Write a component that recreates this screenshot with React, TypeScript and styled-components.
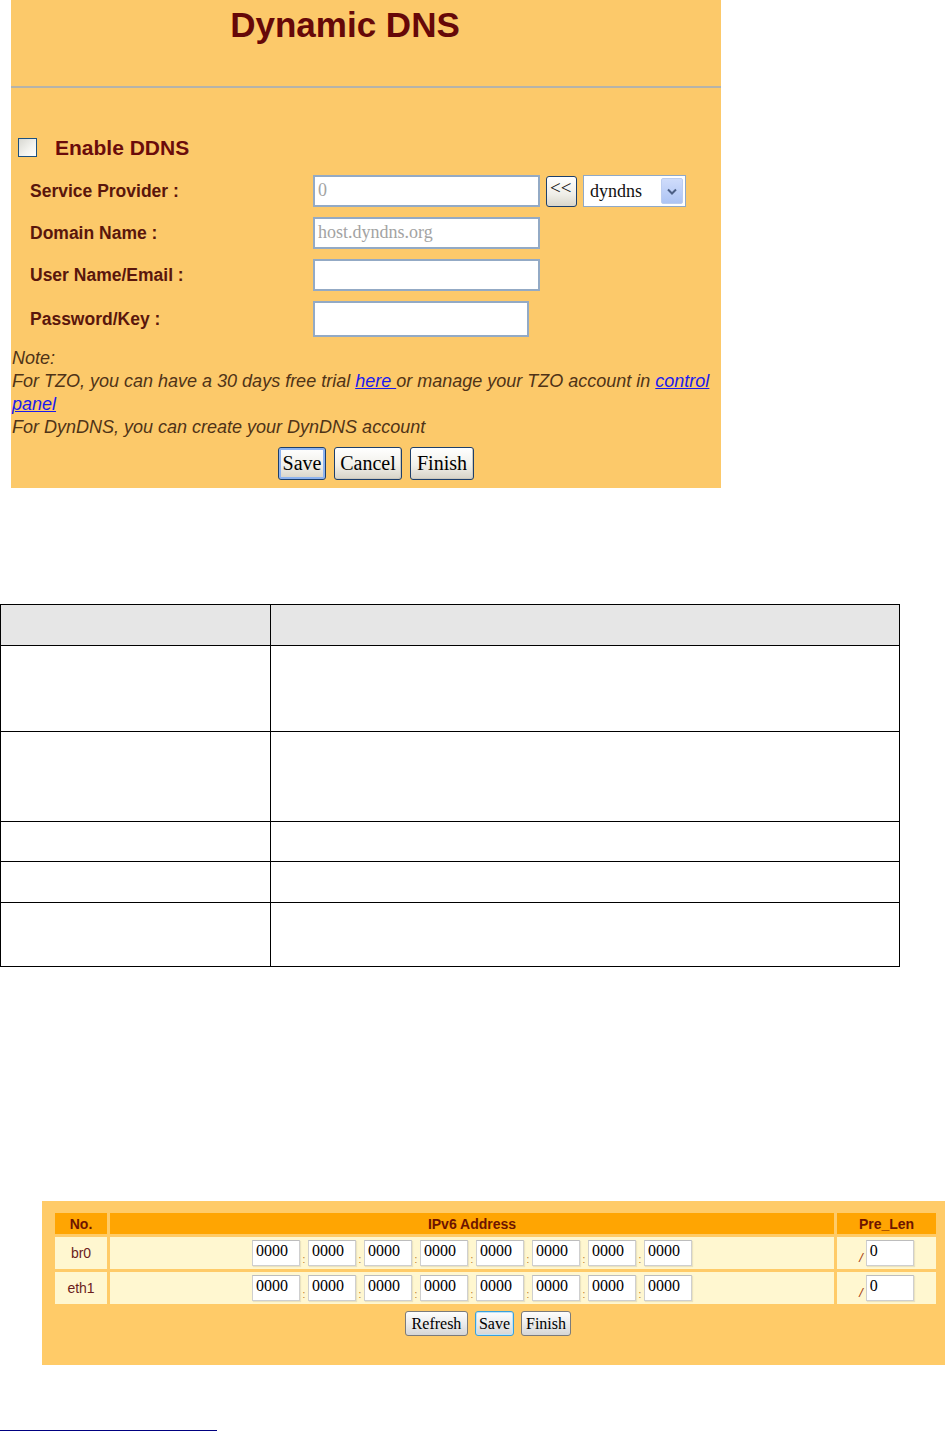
import React from 'react';
import styled, { createGlobalStyle } from 'styled-components';

const GlobalStyle = createGlobalStyle`
  html, body { margin: 0; padding: 0; background: #ffffff; overflow-x: hidden; }
  body { font-family: "Liberation Sans", Arial, sans-serif; }
  * { box-sizing: border-box; }
`;

const Page = styled.div`
  width: 945px;
  display: flex;
  flex-direction: column;
  align-items: flex-start;
`;

/* ---------- Dynamic DNS panel ---------- */
const DdnsPanel = styled.section`
  margin-left: 11px;
  width: 710px;
  height: 488px;
  background: #fcc96a;
  display: flex;
  flex-direction: column;
`;

const TitleBar = styled.header`
  height: 88px;
  border-bottom: 2px solid #b5b3aa;
  padding-right: 42px;
  text-align: center;
`;

const Title = styled.h1`
  margin: 0;
  padding-top: 5px;
  font-size: 35px;
  line-height: 40px;
  font-weight: bold;
  color: #660808;
`;

const FormBody = styled.div`
  display: flex;
  flex-direction: column;
`;

const CheckRow = styled.label`
  margin-top: 50px;
  margin-left: 7px;
  height: 19px;
  display: flex;
  align-items: center;
  gap: 18px;
  font-size: 21px;
  font-weight: bold;
  color: #6a0b0b;
`;

const CheckBox = styled.span`
  width: 19px;
  height: 19px;
  border: 1px solid #1c5180;
  background: linear-gradient(135deg, #d8d8d2 0%, #f4f4f0 60%, #ffffff 100%);
`;

const FieldGrid = styled.div`
  margin-top: 18px;
  padding-left: 19px;
  display: grid;
  grid-template-columns: 283px auto;
  row-gap: 10px;
  align-items: center;
`;

const FieldLabel = styled.span`
  font-size: 17.5px;
  font-weight: bold;
  color: #5a160c;
`;

const FieldCell = styled.div`
  display: flex;
  align-items: center;
  gap: 6px;
`;

const TextBox = styled.div<{ $w: number; $h: number }>`
  width: ${(p) => p.$w}px;
  height: ${(p) => p.$h}px;
  border: 2px solid #93aac5;
  background: #ffffff;
  padding: 2px 3px;
  font-family: "Liberation Serif", "Times New Roman", serif;
  font-size: 18px;
  line-height: 22px;
  color: #a3a3a3;
`;

const SmallXpButton = styled.div`
  width: 31px;
  height: 31px;
  border: 1px solid #1d3f6b;
  border-radius: 3px;
  background: linear-gradient(#ffffff, #efeee8 60%, #d9d6cb);
  font-family: "Liberation Serif", "Times New Roman", serif;
  font-size: 19px;
  line-height: 20px;
  padding: 1px 0 0 3px;
  color: #111;
`;

const SelectBox = styled.div`
  width: 103px;
  height: 32px;
  border: 1px solid #8fa9c8;
  background: #ffffff;
  display: flex;
  align-items: center;
  justify-content: space-between;
  padding: 2px 2px 2px 6px;
  font-family: "Liberation Serif", "Times New Roman", serif;
  font-size: 18px;
  color: #111;
`;

const SelectArrow = styled.span`
  width: 22px;
  height: 26px;
  border: 1px solid #bccdf0;
  border-radius: 2px;
  background: linear-gradient(#cfdcfb, #adc4f4);
  display: flex;
  align-items: center;
  justify-content: center;
`;

const Note = styled.div`
  margin-top: 10px;
  padding-left: 1px;
  font-size: 18px;
  line-height: 23px;
  font-style: italic;
  color: #4f3317;
`;

const NoteLink = styled.a`
  color: #1a1aee;
  text-decoration: underline;
`;

const ButtonRow = styled.div<{ $shift: number; $top: number; $gap: number }>`
  margin-top: ${(p) => p.$top}px;
  display: flex;
  justify-content: center;
  gap: ${(p) => p.$gap}px;
  padding-left: ${(p) => Math.max(p.$shift, 0)}px;
  padding-right: ${(p) => Math.max(-p.$shift, 0)}px;
`;

const XpButton = styled.button<{ $w: number; $focus?: boolean }>`
  width: ${(p) => p.$w}px;
  height: 33px;
  padding: 0;
  border: 1px solid #1d3f6b;
  border-radius: 3px;
  background: linear-gradient(#ffffff, #f1f0ea 55%, #d7d3c7);
  font-family: "Liberation Serif", "Times New Roman", serif;
  font-size: 20px;
  color: #000;
  box-shadow: ${(p) => (p.$focus ? 'inset 0 0 0 2px #8db3ef' : 'inset -1px -1px 0 #cbc8bd')};
`;

/* ---------- description table ---------- */
const DescTable = styled.table`
  margin-top: 116px;
  width: 900px;
  border-collapse: collapse;
  border: 1px solid #000;
`;

const DescRow = styled.tr<{ $h: number; $head?: boolean }>`
  height: ${(p) => p.$h}px;
  background: ${(p) => (p.$head ? '#e6e6e6' : '#ffffff')};
`;

const DescCell = styled.td`
  border: 1px solid #000;
  padding: 0;
  &:first-child { width: 270px; }
`;

/* ---------- IPv6 panel ---------- */
const Ipv6Panel = styled.section`
  margin-top: 234px;
  margin-left: 42px;
  width: 907px;
  height: 164px;
  flex-shrink: 0;
  background: #ffcb68;
  padding: 9px 10px 0 10px;
`;

const Ipv6Table = styled.table`
  width: 887px;
  border-collapse: separate;
  border-spacing: 3px;
  font-size: 14px;
`;

const HeadCell = styled.th<{ $w: number }>`
  width: ${(p) => p.$w}px;
  height: 21px;
  padding: 0;
  background: #ffa502;
  color: #6e1400;
  font-weight: bold;
  font-size: 14px;
  text-align: center;
`;

const BodyCell = styled.td`
  height: 32px;
  padding: 0;
  background: #fff7d0;
  color: #6b1d1d;
  text-align: center;
  vertical-align: middle;
`;

const AddrGroup = styled.div`
  display: inline-flex;
  align-items: center;
`;

const AddrBox = styled.div`
  width: 48px;
  height: 26px;
  border: 1px solid #cfcfcf;
  border-top-color: #bdbdbd;
  box-shadow: 1px 1px 1px rgba(0, 0, 0, 0.08);
  background: #fff;
  padding: 0 3px;
  text-align: left;
  font-family: "Liberation Serif", "Times New Roman", serif;
  font-size: 16px;
  line-height: 20px;
  color: #000;
`;

const Sep = styled.span`
  width: 8px;
  align-self: flex-end;
  text-align: center;
  font-size: 10px;
  line-height: 12px;
  color: #b8741c;
`;

const Slash = styled.span`
  margin-right: 3px;
  align-self: flex-end;
  font-size: 13px;
  line-height: 16px;
  font-style: italic;
  color: #a2380e;
`;

const SmallButton = styled.button<{ $w: number; $focus?: boolean }>`
  width: ${(p) => p.$w}px;
  height: 25px;
  padding: 0;
  border: 1px solid ${(p) => (p.$focus ? '#3aa0dc' : '#7b7b7b')};
  border-radius: 3px;
  background: linear-gradient(#fdfdfd, #ececec 50%, #d6d6d6);
  font-family: "Liberation Serif", "Times New Roman", serif;
  font-size: 16px;
  color: #000;
  box-shadow: ${(p) => (p.$focus ? 'inset 0 0 0 1px #bfe3f7' : 'none')};
`;

const FootRule = styled.div`
  margin-top: 65px;
  width: 217px;
  height: 2px;
  background: #000080;
`;

const ChevronDown = () => (
  <svg width="10" height="7" viewBox="0 0 10 7">
    <path d="M1 1.5 L5 5.5 L9 1.5" fill="none" stroke="#4b5f86" strokeWidth="2" />
  </svg>
);

const descRows = [86, 90, 40, 41, 64];
const addrParts = Array.from({ length: 8 }, () => '0000');

function AddressCells() {
  return (
    <AddrGroup>
      {addrParts.map((v, i) => (
        <React.Fragment key={i}>
          {i > 0 && <Sep>:</Sep>}
          <AddrBox>{v}</AddrBox>
        </React.Fragment>
      ))}
    </AddrGroup>
  );
}

function PrefixCell() {
  return (
    <AddrGroup>
      <Slash>/</Slash>
      <AddrBox>0</AddrBox>
    </AddrGroup>
  );
}

export default function App() {
  return (
    <>
      <GlobalStyle />
      <Page>
        <DdnsPanel>
          <TitleBar>
            <Title>Dynamic DNS</Title>
          </TitleBar>
          <FormBody>
            <CheckRow>
              <CheckBox />
              Enable DDNS
            </CheckRow>
            <FieldGrid>
              <FieldLabel>Service Provider :</FieldLabel>
              <FieldCell>
                <TextBox $w={227} $h={32}>0</TextBox>
                <SmallXpButton>&lt;&lt;</SmallXpButton>
                <SelectBox>
                  dyndns
                  <SelectArrow>
                    <ChevronDown />
                  </SelectArrow>
                </SelectBox>
              </FieldCell>
              <FieldLabel>Domain Name :</FieldLabel>
              <FieldCell>
                <TextBox $w={227} $h={32}>host.dyndns.org</TextBox>
              </FieldCell>
              <FieldLabel>User Name/Email :</FieldLabel>
              <FieldCell>
                <TextBox $w={227} $h={32} />
              </FieldCell>
              <FieldLabel>Password/Key :</FieldLabel>
              <FieldCell>
                <TextBox $w={216} $h={36} />
              </FieldCell>
            </FieldGrid>
            <Note>
              <div>Note:</div>
              <div>
                For TZO, you can have a 30 days free trial <NoteLink href="#">here </NoteLink>or manage
                your TZO account in <NoteLink href="#">control panel</NoteLink>
              </div>
              <div>For DynDNS, you can create your DynDNS account</div>
            </Note>
            <ButtonRow $shift={20} $top={8} $gap={8}>
              <XpButton $w={48} $focus>Save</XpButton>
              <XpButton $w={68}>Cancel</XpButton>
              <XpButton $w={64}>Finish</XpButton>
            </ButtonRow>
          </FormBody>
        </DdnsPanel>

        <DescTable>
          <tbody>
            <DescRow $h={41} $head>
              <DescCell />
              <DescCell />
            </DescRow>
            {descRows.map((h, i) => (
              <DescRow key={i} $h={h}>
                <DescCell />
                <DescCell />
              </DescRow>
            ))}
          </tbody>
        </DescTable>

        <Ipv6Panel>
          <Ipv6Table>
            <thead>
              <tr>
                <HeadCell $w={52}>No.</HeadCell>
                <HeadCell $w={724}>IPv6 Address</HeadCell>
                <HeadCell $w={99}>Pre_Len</HeadCell>
              </tr>
            </thead>
            <tbody>
              {['br0', 'eth1'].map((name) => (
                <tr key={name}>
                  <BodyCell>{name}</BodyCell>
                  <BodyCell>
                    <AddressCells />
                  </BodyCell>
                  <BodyCell>
                    <PrefixCell />
                  </BodyCell>
                </tr>
              ))}
            </tbody>
          </Ipv6Table>
          <ButtonRow $shift={-15} $top={4} $gap={7}>
            <SmallButton $w={63}>Refresh</SmallButton>
            <SmallButton $w={39} $focus>Save</SmallButton>
            <SmallButton $w={50}>Finish</SmallButton>
          </ButtonRow>
        </Ipv6Panel>

        <FootRule />
      </Page>
    </>
  );
}
